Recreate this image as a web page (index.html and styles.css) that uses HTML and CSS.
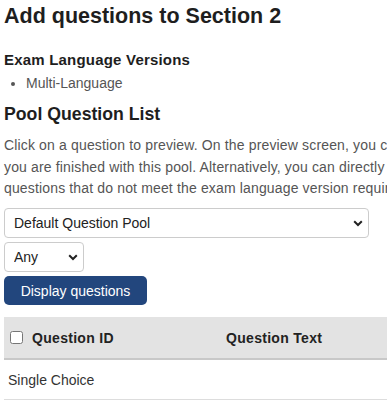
FILE: index.html
```html
<!DOCTYPE html>
<html>
<head>
<meta charset="utf-8">
<link rel="stylesheet" href="styles.css">
</head>
<body>
<div class="page">
  <h1 class="title">Add questions to Section 2</h1>
  <h3 class="sub">Exam Language Versions</h3>
  <ul class="langs"><li>Multi-Language</li></ul>
  <h2 class="pool">Pool Question List</h2>
  <p class="intro">
    <span class="line">Click on a question to preview. On the preview screen, you can add the question to this section or return to this list when</span>
    <span class="line">you are finished with this pool. Alternatively, you can directly add questions using the checkboxes below. Please note that</span>
    <span class="line">questions that do not meet the exam language version requirements cannot be added.</span>
  </p>
  <div class="field wide">
    <select class="sel"><option>Default Question Pool</option></select>
    <svg class="chev" width="10" height="7" viewBox="0 0 10 7"><path d="M1.2 1.3 L5 5 L8.8 1.3" fill="none" stroke="#222" stroke-width="2"/></svg>
  </div>
  <div class="field narrow">
    <select class="sel"><option>Any</option></select>
    <svg class="chev" width="10" height="7" viewBox="0 0 10 7"><path d="M1.2 1.3 L5 5 L8.8 1.3" fill="none" stroke="#222" stroke-width="2"/></svg>
  </div>
  <button class="btn">Display questions</button>
  <table class="qtable">
    <thead>
      <tr>
        <th class="c-id"><span class="thin"><input type="checkbox" class="cb">Question ID</span></th>
        <th class="c-text">Question Text</th>
        <th class="c-rest"></th>
      </tr>
    </thead>
    <tbody>
      <tr class="group"><td colspan="3">Single Choice</td></tr>
    </tbody>
  </table>
</div>
</body>
</html>
```
FILE: styles.css
```css
html, body {
  margin: 0;
  padding: 0;
  overflow: hidden;
  background: #fff;
}
body {
  font-family: "Liberation Sans", Arial, sans-serif;
  font-size: 14px;
  color: #222;
}
.page {
  padding: 0 4px;
  width: 700px;
}
.title {
  font-size: 21.5px;
  font-weight: bold;
  line-height: 25px;
  margin: 4px 0 0;
  color: #1e1e1e;
}
.sub {
  font-size: 15px;
  font-weight: bold;
  line-height: 17px;
  letter-spacing: 0.2px;
  margin: 22px 0 0;
  color: #1e1e1e;
}
.langs {
  margin: 5px 0 0;
  padding-left: 22px;
  color: #555;
  line-height: 20px;
}
.pool {
  font-size: 17.7px;
  font-weight: bold;
  line-height: 21px;
  margin: 11px 0 0;
  color: #1e1e1e;
}
.intro {
  margin: 10px 0 0;
  color: #555;
  line-height: 21.7px;
  letter-spacing: 0.15px;
}
.line {
  display: block;
  white-space: nowrap;
}
.field {
  position: relative;
}
.wide {
  width: 365px;
  margin-top: 8px;
}
.narrow {
  width: 80px;
  margin-top: 4px;
}
.sel {
  display: block;
  width: 100%;
  height: 30px;
  box-sizing: border-box;
  appearance: none;
  -webkit-appearance: none;
  border: 1px solid #ccc;
  border-radius: 4px;
  background: #fff;
  font-family: "Liberation Sans", Arial, sans-serif;
  font-size: 14px;
  color: #222;
  padding: 0 9px;
  margin: 0;
}
.chev {
  position: absolute;
  right: 6px;
  top: 12px;
  pointer-events: none;
}
.btn {
  display: block;
  margin-top: 4px;
  height: 29px;
  width: 143px;
  border: none;
  border-radius: 5px;
  background: #22467d;
  color: #fff;
  font-family: "Liberation Sans", Arial, sans-serif;
  font-size: 14px;
  padding: 0;
}
.qtable {
  margin-top: 12px;
  width: 700px;
  border-collapse: collapse;
}
.qtable th {
  background: #e3e3e3;
  height: 41px;
  padding: 0 8px;
  text-align: left;
  font-weight: bold;
  font-size: 14px;
  letter-spacing: 0.3px;
  color: #222;
  border-bottom: 2px solid #c8c8c8;
}
.thin {
  display: flex;
  align-items: center;
}
.cb {
  width: 13px;
  height: 13px;
  margin: 0 9px 0 -2px;
}
.c-id {
  width: 198px;
}
.c-text {
  width: 180px;
}
.qtable td {
  height: 39px;
  padding: 0 4px;
  color: #333;
  border-bottom: 1px solid #ddd;
}
```
